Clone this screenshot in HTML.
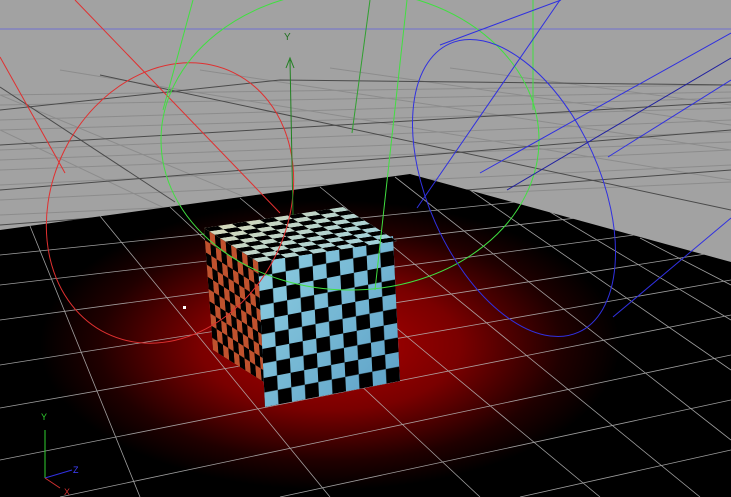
<!DOCTYPE html>
<html><head><style>
html,body{margin:0;padding:0;width:731px;height:497px;overflow:hidden;background:#a2a2a2}
svg{display:block}
</style></head><body>
<svg width="731" height="497" viewBox="0 0 731 497" xmlns="http://www.w3.org/2000/svg" font-family="Liberation Sans, sans-serif">
<defs>
<pattern id="ck" width="0.2" height="0.2" patternUnits="userSpaceOnUse">
<rect width="0.1" height="0.1" fill="#000"/><rect x="0.1" y="0.1" width="0.1" height="0.1" fill="#000"/>
</pattern>
<radialGradient id="glow" cx="330" cy="345" r="290" gradientUnits="userSpaceOnUse" gradientTransform="translate(330 345) scale(1 0.5) translate(-330 -345)">
<stop offset="0" stop-color="#b00000"/><stop offset="0.45" stop-color="#7a0000"/><stop offset="0.8" stop-color="#200000"/><stop offset="1" stop-color="#000"/>
</radialGradient>
<linearGradient id="fr" x1="0" y1="0" x2="1" y2="1"><stop offset="0" stop-color="#8ccce0"/><stop offset="1" stop-color="#5fa3c8"/></linearGradient>
<linearGradient id="tp" x1="0" y1="0" x2="1" y2="1"><stop offset="0" stop-color="#d8d8b8"/><stop offset="1" stop-color="#9ccfdc"/></linearGradient>
<clipPath id="fl"><polygon points="0,230 410,174 731,262 731,497 0,497"/></clipPath>
</defs>
<g stroke="#8c8c8c" stroke-width="1" fill="none">
<path d="M0 95 L731 85"/><path d="M0 120 L731 98"/><path d="M0 130 L731 108"/><path d="M0 150 L731 120"/>
<path d="M0 160 L731 132"/><path d="M0 185 L731 150"/><path d="M0 200 L731 165"/><path d="M0 215 L731 182"/>
<path d="M0 170 L731 142"/><path d="M0 105 L731 92"/>
<path d="M60 70 L731 180"/><path d="M200 70 L731 150"/><path d="M330 68 L731 125"/><path d="M0 95 L300 220"/>
<path d="M0 130 L200 225"/><path d="M450 68 L731 105"/>
</g>
<g stroke="#4a4a4a" stroke-width="1" fill="none">
<path d="M0 110 L280 80 L731 85"/><path d="M0 145 L731 102"/><path d="M0 190 L731 130"/><path d="M0 225 L731 170"/>
<path d="M100 75 L731 210"/><path d="M0 87 L175 202"/>
</g>
<line x1="0" y1="29" x2="731" y2="29" stroke="#7070d0" stroke-width="1"/>
<polygon points="0,230 410,174 731,262 731,497 0,497" fill="url(#glow)"/>
<g stroke="#bbb" stroke-width="0.8" fill="none" opacity="0.85" clip-path="url(#fl)">
<path d="M0 255 L731 180"/><path d="M0 285 L731 200"/><path d="M0 320 L731 222"/><path d="M0 365 L731 250"/>
<path d="M0 408 L731 280"/><path d="M0 460 L731 315"/><path d="M60 497 L731 355"/><path d="M280 497 L731 400"/><path d="M520 497 L731 450"/>
<path d="M30 226 L140 497"/><path d="M100 216 L330 497"/><path d="M170 207 L480 497"/><path d="M240 198 L600 497"/>
<path d="M320 187 L700 497"/><path d="M395 177 L731 440"/><path d="M470 190 L731 370"/><path d="M550 212 L731 320"/><path d="M640 238 L731 285"/>
</g>
<g transform="matrix(54 34 9 122 204 228)"><rect width="1" height="1" fill="#c0522e"/><rect width="1" height="1" fill="url(#ck)"/></g>
<g transform="matrix(135 -26 7 145 258 262)"><rect width="1" height="1" fill="url(#fr)"/><rect width="1" height="1" fill="url(#ck)"/></g>
<g transform="matrix(54 34 139 -21 204 228)"><rect width="1" height="1" fill="url(#tp)"/><rect width="1" height="1" fill="url(#ck)"/></g>
<g fill="none" stroke-width="1">
<ellipse cx="170" cy="203" rx="118" ry="145" transform="rotate(26 170 203)" stroke="#e03030"/>
<line x1="75" y1="0" x2="280" y2="213" stroke="#e03030"/>
<line x1="0" y1="57" x2="65" y2="173" stroke="#e03030"/>
<ellipse cx="350" cy="140" rx="189" ry="150" stroke="#40e040"/>
<path d="M193 0 L163 110" stroke="#40e040"/>
<path d="M533 0 L533 110" stroke="#40e040"/>
<path d="M370 0 L352 133" stroke="#30a030"/>
<path d="M407 0 L375 290" stroke="#40e040"/>
<line x1="290" y1="60" x2="293" y2="215" stroke="#208020"/>
<path d="M286 68 L290 58 L294 68" stroke="#208020"/>
<text x="284" y="40" font-size="10" fill="#207020">Y</text>
<ellipse cx="514" cy="188" rx="86" ry="158" transform="rotate(-24 514 188)" stroke="#3030e0"/>
<line x1="560" y1="0" x2="417" y2="208" stroke="#3030e0"/>
<line x1="440" y1="45" x2="561" y2="0" stroke="#3030e0"/>
<line x1="480" y1="173" x2="731" y2="33" stroke="#3030e0"/>
<line x1="507" y1="190" x2="731" y2="58" stroke="#2020a0"/>
<line x1="608" y1="157" x2="731" y2="80" stroke="#3030e0"/>
<line x1="613" y1="317" x2="731" y2="218" stroke="#3030e0"/>
</g>
<rect x="183" y="306" width="3" height="3" fill="#fff"/>
<g stroke-width="1">
<line x1="45" y1="430" x2="45" y2="478" stroke="#30d030"/>
<line x1="45" y1="478" x2="72" y2="470" stroke="#3030e0"/>
<line x1="45" y1="478" x2="60" y2="488" stroke="#d03030"/>
</g>
<text x="41" y="420" font-size="9" fill="#30d030">Y</text>
<text x="73" y="473" font-size="9" fill="#4040ff">Z</text>
<text x="64" y="495" font-size="9" fill="#d03030">X</text>
</svg>
</body></html>
